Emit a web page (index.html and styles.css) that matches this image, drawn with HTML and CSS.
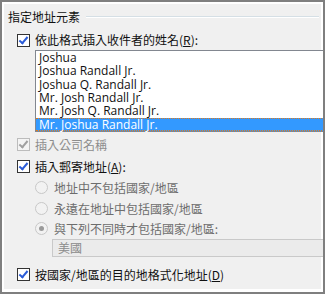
FILE: index.html
```html
<!DOCTYPE html>
<html lang="zh-Hant">
  <head>
    <meta charset="UTF-8" />
    <title>指定地址元素</title>
    <link rel="stylesheet" href="styles.css">
  </head>
  <body>
    <div class="frame">
      <div class="panel">
        <header class="group-title">
          <span>指定地址元素</span>
          <div class="rule"></div>
        </header>

        <label class="check-row first">
          <span class="box checked"></span>
          <span class="text">依此格式插入收件者的姓名(<u>R</u>):</span>
        </label>

        <ul class="listbox">
          <li>Joshua</li>
          <li>Joshua Randall Jr.</li>
          <li>Joshua Q. Randall Jr.</li>
          <li>Mr. Josh Randall Jr.</li>
          <li>Mr. Josh Q. Randall Jr.</li>
          <li class="selected">Mr. Joshua Randall Jr.</li>
        </ul>

        <label class="check-row disabled">
          <span class="box checked"></span>
          <span class="text">插入公司名稱</span>
        </label>

        <label class="check-row">
          <span class="box checked"></span>
          <span class="text">插入郵寄地址(<u>A</u>):</span>
        </label>

        <div class="radios">
          <label class="radio-row">
            <span class="dot"></span>
            <span class="text">地址中不包括國家/地區</span>
          </label>
          <label class="radio-row">
            <span class="dot"></span>
            <span class="text">永遠在地址中包括國家/地區</span>
          </label>
          <label class="radio-row">
            <span class="dot on"></span>
            <span class="text">與下列不同時才包括國家/地區:</span>
          </label>
          <div class="combo">美國</div>
        </div>

        <label class="check-row last">
          <span class="box checked"></span>
          <span class="text">按國家/地區的目的地格式化地址(<u>D</u>)</span>
        </label>
      </div>
    </div>
  </body>
</html>
```

FILE: styles.css
```css
* {
  margin: 0;
  padding: 0;
  box-sizing: border-box;
}
body {
  width: 325px;
  height: 294px;
  background: #fff;
  font-family: "Noto Sans CJK TC", "Liberation Sans", sans-serif;
  font-size: 12px;
  color: #111;
}
.frame {
  width: 325px;
  height: 294px;
  border: 2px solid #7f7f7f;
  padding: 2px 2px 3px 2px;
  background: #fff;
  overflow: hidden;
}
.panel {
  height: 100%;
  background: #f0f0f0;
  padding: 6px 0 0 4px;
}
.group-title {
  display: flex;
  align-items: center;
  height: 14px;
  margin-right: 2px;
}
.group-title span {
  line-height: 14px;
  white-space: nowrap;
}
.group-title .rule {
  flex: 1;
  height: 2px;
  margin-left: 6px;
  border-top: 1px solid #d5dfe5;
  border-bottom: 1px solid #fff;
}
.check-row {
  display: flex;
  align-items: center;
  height: 16px;
  margin-left: 9px;
  white-space: nowrap;
}
.check-row .text {
  margin-left: 5px;
  line-height: 16px;
}
.check-row.first {
  margin-top: 8px;
}
.check-row + .check-row {
  margin-top: 6px;
}
.check-row.last {
  margin-top: 10px;
}
.box {
  width: 13px;
  height: 13px;
  border: 1px solid #333;
  background: #fff;
  position: relative;
  flex: none;
}
.box.checked::after {
  content: "";
  position: absolute;
  left: 3px;
  top: 0px;
  width: 3px;
  height: 7px;
  border: solid #2a5bd7;
  border-width: 0 2px 2px 0;
  transform: rotate(40deg);
}
.disabled .box {
  border-color: #bcbcbc;
  background: #f4f4f4;
}
.disabled .box.checked::after {
  border-color: #a0a0a0;
}
.disabled .text {
  color: #8d8d8d;
}
u {
  text-decoration: underline;
  text-underline-offset: 1px;
}
.listbox {
  list-style: none;
  margin: 2px -3px 5px 27px;
  background: #fff;
  border: 1px solid #828790;
  border-right: none;
  font-family: "Open Sans", "Liberation Sans", sans-serif;
  font-size: 12px;
}
.listbox li {
  height: 13.33px;
  line-height: 13px;
  padding-left: 3px;
  white-space: nowrap;
  color: #111;
}
.listbox li.selected {
  background: #3399ff;
  color: #fff;
  border-top: 1px dotted #e07a1a;
  border-bottom: 1px dotted #e07a1a;
  line-height: 11px;
}
.radios {
  margin-left: 27px;
  padding-top: 5px;
}
.radio-row {
  display: flex;
  align-items: center;
  height: 16px;
  margin-bottom: 4.5px;
  white-space: nowrap;
  color: #6d6d6d;
}
.radio-row:nth-child(3) {
  margin-bottom: 2px;
}
.radio-row .text {
  margin-left: 6px;
}
.dot {
  width: 13px;
  height: 13px;
  border-radius: 50%;
  border: 1px solid #c8c8c8;
  background: #f2f2f2;
  flex: none;
  position: relative;
}
.dot.on::after {
  content: "";
  position: absolute;
  left: 3px;
  top: 3px;
  width: 5px;
  height: 5px;
  border-radius: 50%;
  background: #9a9a9a;
}
.combo {
  margin: 0 -3px 0 17px;
  height: 18px;
  border: 1px solid #c9c9c9;
  border-right: none;
  background: #ebebeb;
  color: #8a8a8a;
  padding-left: 5px;
  line-height: 16px;
}
```
